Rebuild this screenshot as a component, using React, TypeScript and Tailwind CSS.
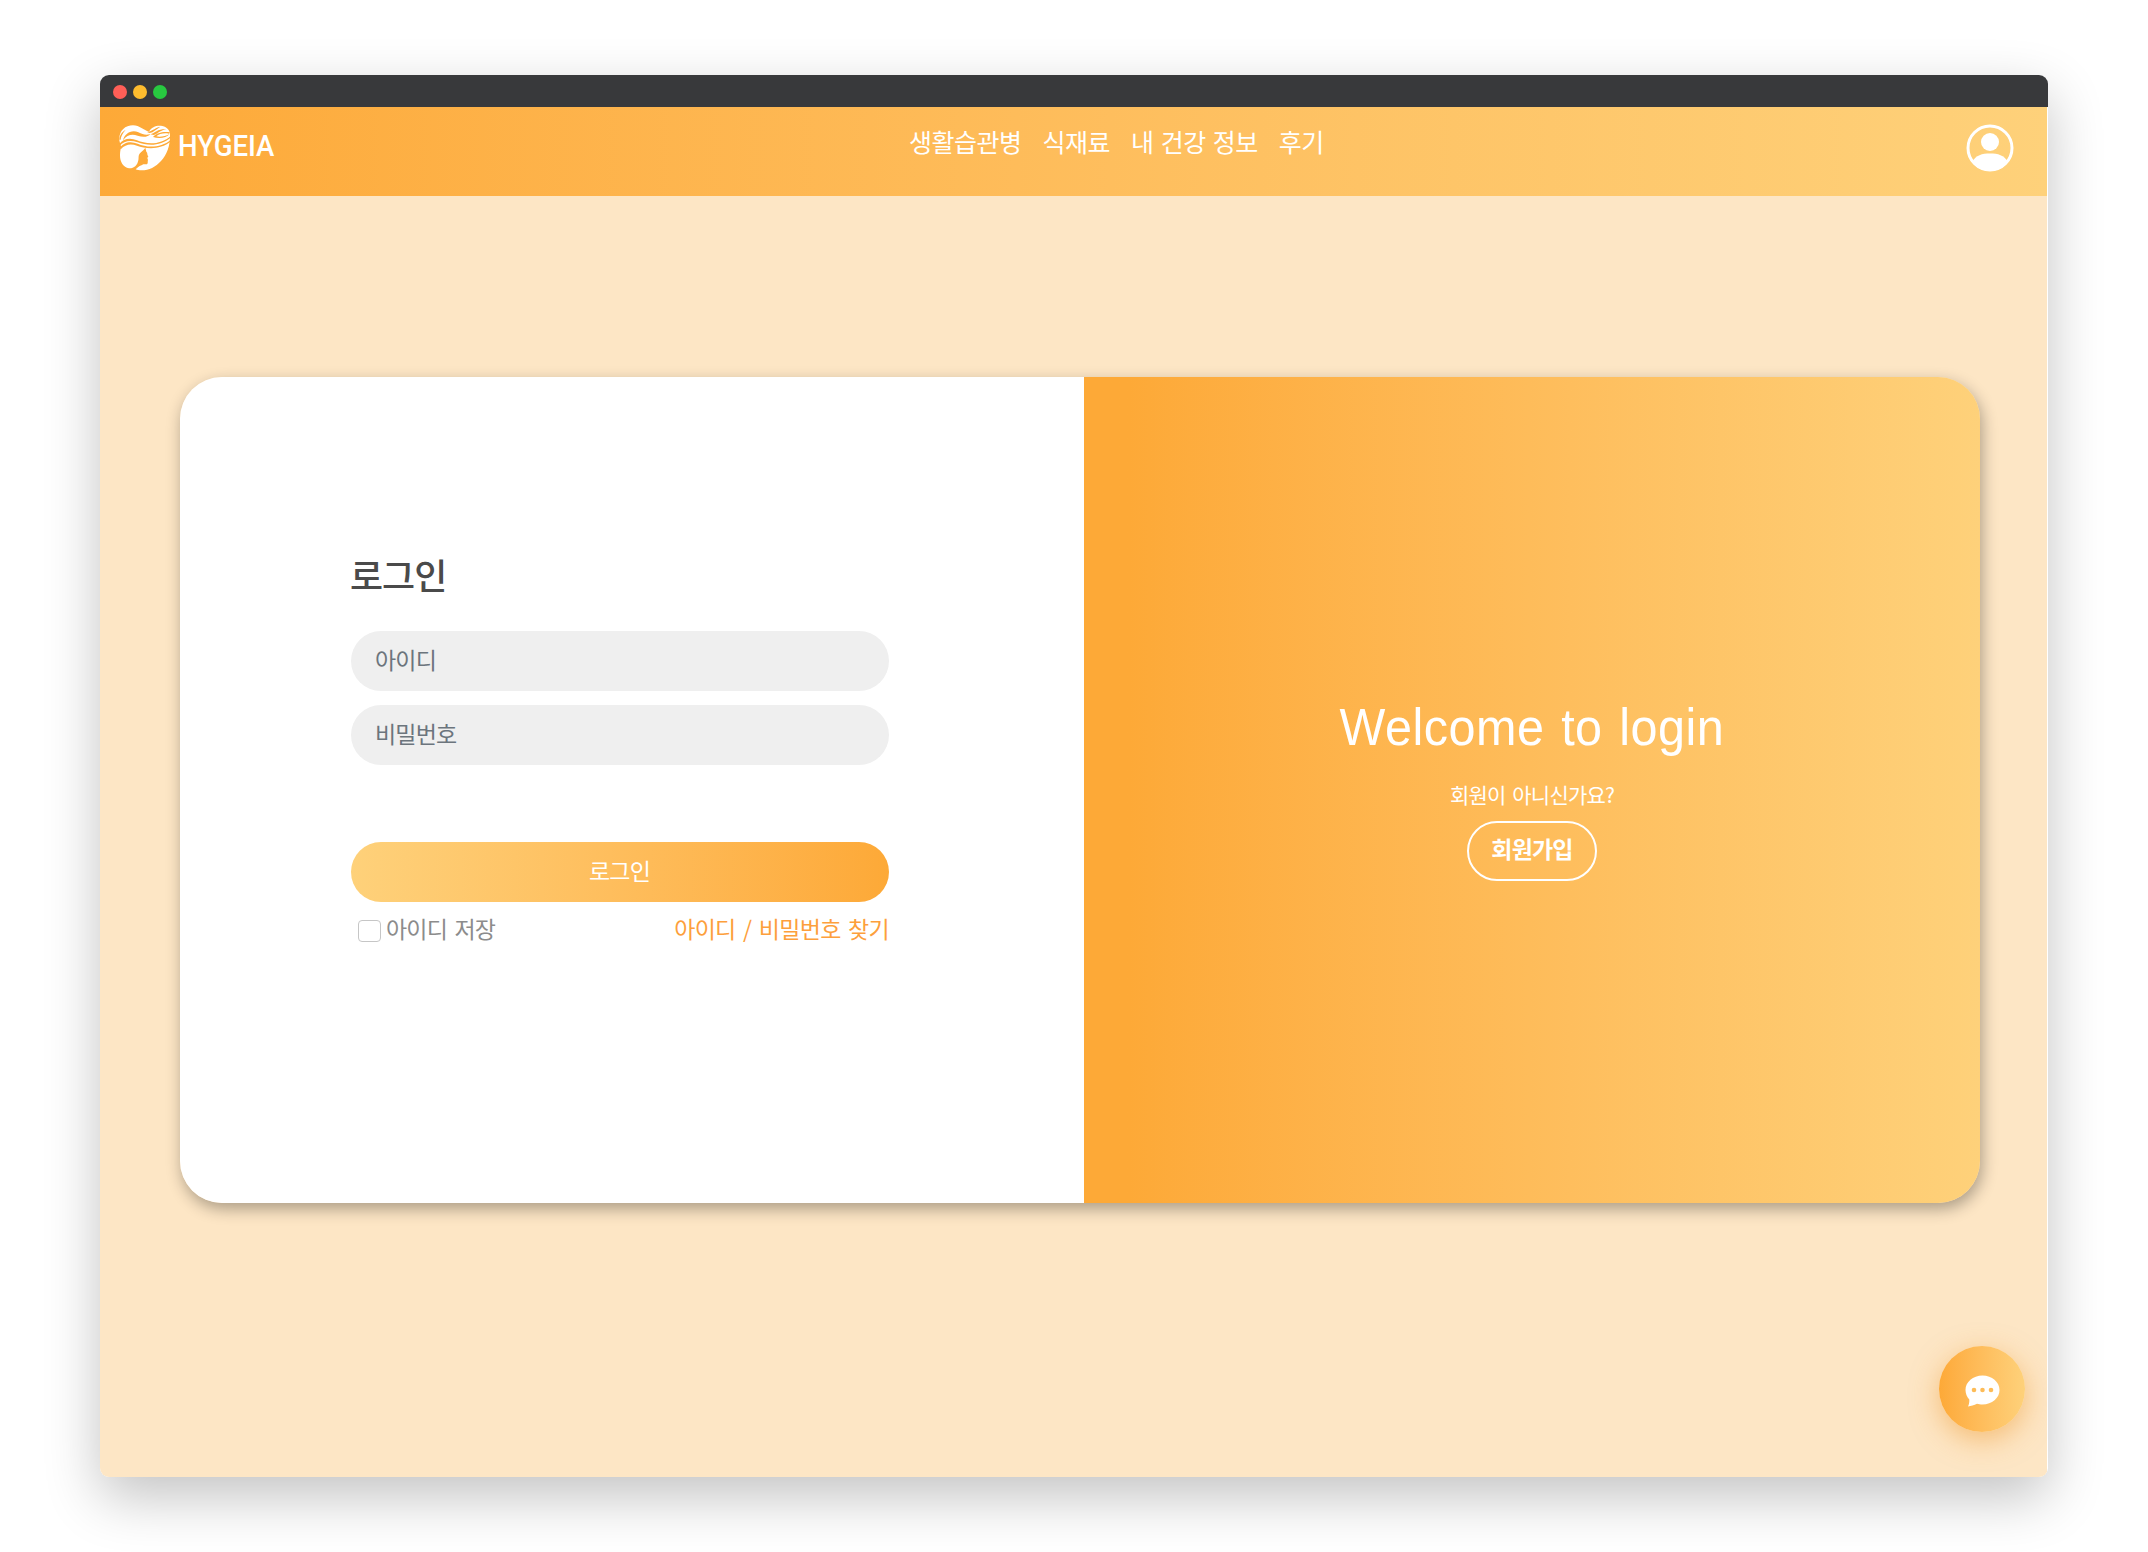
const NAV_ITEMS = ["생활습관병", "식재료", "내 건강 정보", "후기"];

function Logo() {
  return (
    <svg className="h-[46px] w-[52px]" viewBox="0 0 156 138" fill="none">
      <path
        d="M1 46 C-1 18 18 1 42 1 C62 1 74 16 90 20 C98 4 116 0 130 3 C146 7 154 18 153 32 C153 62 144 88 126 108 C110 126 90 136 68 136 C60 136 55 135 50 133 C58 124 66 122 73 118 L84 118 C88 114 85 110 87 105 L85 99 L88 94 C83 90 87 84 82 80 L79 68 C76 74 70 77 66 82 C56 90 60 98 58 106 C55 122 44 131 30 130 C12 127 2 110 3 88 C3 78 6 70 6 64 C4 58 2 52 1 46Z"
        fill="#fff"
      />
      <g fill="#fda937">
        <path d="M0 58 C14 40 34 38 54 46 C80 57 124 62 156 32 L156 37 C124 66 84 62 56 52 C34 44 14 48 2 62Z" />
        <path d="M2 70 C14 50 36 48 56 56 C84 68 124 70 156 44 L156 49 C124 76 80 72 54 62 C36 55 18 58 6 72Z" />
        <path d="M12 46 C16 28 36 12 58 22 C72 29 82 32 94 27 C88 36 72 38 56 32 C38 26 24 30 12 46Z" />
        <path d="M1 44 C2 30 8 22 20 14 C10 26 6 34 5 44Z" />
        <path d="M84 21 C98 20 106 9 124 5 C112 12 104 22 92 24Z" />
        <path d="M94 28 C108 24 116 11 142 12 C126 15 116 26 104 30Z" />
        <path d="M102 36 C114 22 134 19 153 22 L150 26 C136 23 120 26 112 34 C124 37 138 34 152 27 C142 40 118 42 102 36Z" />
      </g>
    </svg>
  );
}

function UserIcon() {
  return (
    <svg className="size-12" viewBox="0 0 48 48">
      <defs>
        <clipPath id="avatar">
          <circle cx="24" cy="24" r="23" />
        </clipPath>
      </defs>
      <circle cx="24" cy="24" r="22" fill="none" stroke="#fff" strokeWidth="3" />
      <circle cx="24" cy="18" r="9" fill="#fff" />
      <path
        d="M6 38 C10 31 16 29.5 24 29.5 C32 29.5 38 31 42 38 L36 48 H12Z"
        fill="#fff"
        clipPath="url(#avatar)"
      />
    </svg>
  );
}

function ChatIcon() {
  return (
    <svg className="h-8 w-[35px]" viewBox="0 0 35 32">
      <path
        d="M17.5 .5 C27 .5 34.5 7 34.5 15 C34.5 23 27 29.5 17.5 29.5 C15.5 29.5 13.5 29.3 12 28.8 C9 30.3 6 31.2 3 31.5 C4 29.5 4.5 27 4.3 24.5 C2 22 .5 18.5 .5 15 C.5 7 8 .5 17.5 .5Z"
        fill="#fff"
      />
      <g fill="#fdbc58">
        <circle cx="9" cy="15" r="2.3" />
        <circle cx="17.5" cy="15" r="2.3" />
        <circle cx="26" cy="15" r="2.3" />
      </g>
    </svg>
  );
}

export default function App() {
  return (
    <div className="h-[1552px] w-[2148px] overflow-hidden bg-white px-[100px] pt-[75px] font-['Noto_Sans_CJK_KR',sans-serif]">
      <div className="relative flex h-[1402px] w-[1948px] flex-col overflow-clip rounded-[9px] bg-white shadow-[0_20px_55px_rgba(0,0,0,0.24)]">
        <div className="flex h-8 shrink-0 items-center gap-[6px] bg-[#38393b] pt-px pl-[13px]">
          <span className="size-[14px] rounded-full bg-[#ff5f57]" />
          <span className="size-[14px] rounded-full bg-[#febc2e]" />
          <span className="size-[14px] rounded-full bg-[#28c840]" />
        </div>

        <div className="mr-px flex flex-1 flex-col bg-[#fde6c5]">
          <header className="flex h-[89px] shrink-0 bg-linear-to-r from-[#fda937] to-[#fed17a]">
            <div className="flex w-[190px] pt-[18px] pl-[19px]">
              <Logo />
              <span className="ml-[7px] origin-left scale-x-[0.92] font-['Roboto',sans-serif] text-[30px] leading-[41px] font-medium text-white">
                HYGEIA
              </span>
            </div>
            <nav className="ml-[619px] flex gap-[21px] pt-4 text-[25px] leading-9 tracking-[-0.5px] whitespace-nowrap text-white [word-spacing:2px]">
              {NAV_ITEMS.map((item) => (
                <a key={item}>{item}</a>
              ))}
            </nav>
            <div className="ml-auto pt-[17px] pr-[33px]">
              <UserIcon />
            </div>
          </header>

          <main className="mt-[181px] ml-20 flex h-[826px] w-[1800px] overflow-hidden rounded-[42px] shadow-[2px_6px_16px_rgba(0,0,0,0.32)]">
            <section className="w-[904px] bg-white pt-[167px] pl-[171px]">
              <div className="w-[538px]">
                <h1 className="-ml-px text-[36px] leading-[60px] font-medium tracking-[-1px] text-[#4a4a4a]">
                  로그인
                </h1>
                <form className="mt-[27px] flex flex-col">
                  <input
                    className="h-[60px] rounded-[30px] bg-[#efefef] px-6 pb-1 text-[23px] tracking-[-0.8px] outline-none placeholder:text-[#6c757d]"
                    placeholder="아이디"
                  />
                  <input
                    type="password"
                    className="mt-[14px] h-[60px] rounded-[30px] bg-[#efefef] px-6 pb-1 text-[23px] tracking-[-0.8px] outline-none placeholder:text-[#6c757d]"
                    placeholder="비밀번호"
                  />
                  <button
                    type="button"
                    className="mt-[77px] h-[60px] rounded-[30px] bg-linear-to-r from-[#fed17a] to-[#fda937] pr-px pb-[3px] text-[23px] tracking-[-0.8px] text-white"
                  >
                    로그인
                  </button>
                </form>
                <div className="mt-[11px] flex justify-between text-[23px] leading-[30px] tracking-[-0.8px] [word-spacing:3px]">
                  <label className="flex text-[#8c8c8c]">
                    <span className="mt-[7px] mr-[5px] ml-[7px] h-[22px] w-[23px] rounded-[4px] border border-[#c6c6c6] bg-white" />
                    아이디 저장
                  </label>
                  <a className="text-[#fd9f3c] tracking-[-0.7px]">아이디 / 비밀번호 찾기</a>
                </div>
              </div>
            </section>
            <section className="flex flex-1 flex-col items-center bg-linear-to-r from-[#fda937] from-5% to-[#fed17a] pt-[317px] text-white">
              <h2 className="scale-x-[0.934] font-['Liberation_Sans',sans-serif] text-[52px] leading-[66px] tracking-[0.5px] [word-spacing:3px]">
                Welcome to login
              </h2>
              <p className="mt-[19px] text-[21px] leading-[30px] tracking-[-0.8px] [word-spacing:3px]">회원이 아니신가요?</p>
              <button
                type="button"
                className="mt-3 h-[60px] w-[130px] rounded-[30px] border-2 border-white pb-[5px] text-[23px] font-bold tracking-[-0.8px]"
              >
                회원가입
              </button>
            </section>
          </main>
        </div>

        <button
          type="button"
          className="absolute right-[23px] bottom-[45px] flex size-[86px] items-center justify-center rounded-full bg-linear-to-r from-[#fda937] to-[#fed17a] pt-1 shadow-[0_8px_28px_rgba(240,150,40,0.5)]"
        >
          <ChatIcon />
        </button>
      </div>
    </div>
  );
}
